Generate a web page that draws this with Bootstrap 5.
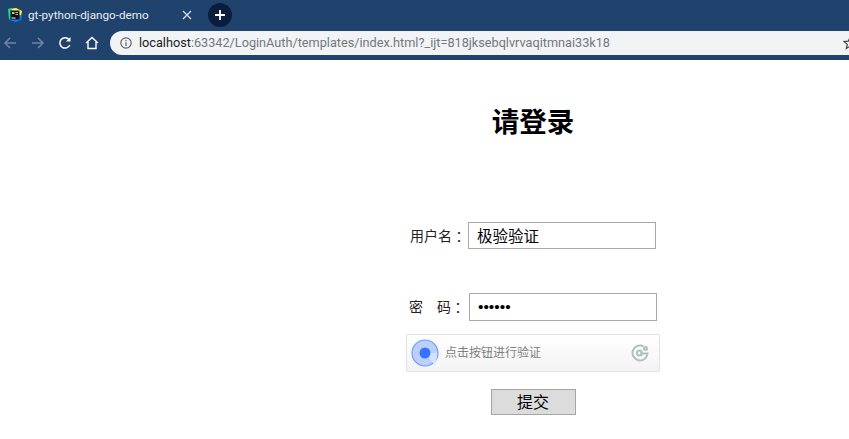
<!DOCTYPE html>
<html lang="zh">
<head>
    <meta charset="UTF-8">
    <meta name="viewport" content="width=device-width, initial-scale=1.0">
    <title>gt-python-django-demo</title>
    <link href="https://cdn.jsdelivr.net/npm/bootstrap@5.3.0/dist/css/bootstrap.min.css" rel="stylesheet">
    <style>
        html, body { height: 100%; overflow: hidden; background: #fff; }
        body { font-family: "Liberation Sans", "Noto Sans CJK SC", sans-serif; color: #000; }

        .chrome-bar { background: #20436d; height: 60px; }
        .tab-strip { height: 29px; padding-left: 8px; }
        .tab-title { font: 11.7px Roboto, "Liberation Sans", sans-serif; color: #e6ebf1; width: 153px; margin-left: 6px; white-space: nowrap; }
        .tab-close { color: #d5dce5; width: 12px; height: 12px; margin-right: 15px; }
        .new-tab { width: 24px; height: 24px; border-radius: 50%; background: #0b1c3d; }
        .tool-strip { height: 27px; padding-left: 3px; }
        .tool-btn { width: 27px; }
        .tool-first { width: 14px; margin-right: 7px; }
        .url-box { height: 24px; flex: 1 1 auto; margin-left: 5px; background: #f1f3f4; border-radius: 12px 0 0 12px; padding-left: 10px; font: 12.7px Roboto, "Liberation Sans", sans-serif; color: #71787f; white-space: nowrap; overflow: hidden; }
        .url-host { color: #202124; }
        .url-info { margin-right: 7px; }
        .url-star { margin-left: auto; margin-right: -8px; }

        .login-wrap { padding-left: 406px; width: 660px; }
        .login-title { font-size: 27.5px; font-weight: 700; line-height: 32px; margin: 47px 0 0; text-align: center; width: 254px; }
        .field-row { font-size: 14px; height: 28px; color: #222; }
        .row-user { margin-top: 82px; margin-left: 4px; }
        .row-pass { margin-top: 44px; margin-left: 3px; }
        .field-label { white-space: nowrap; }
        .row-user .field-label { margin-right: 2px; padding-top: 2px; }
        .row-pass .field-label { margin-right: 4px; }
        .label-colon { font-family: "Noto Sans CJK TC", sans-serif; line-height: 1; vertical-align: -1px; }
        .text-field { width: 188px; height: 27px; border: 1px solid #a9a9a9; border-radius: 0; padding: 0 8px; font-size: 15.5px; outline: 0; color: #000; background: #fff; }
        .row-pass .text-field { height: 28px; }
        .captcha-box { width: 254px; height: 38px; margin-top: 13px; border: 1px solid #e2e2e2; border-radius: 2px; background: linear-gradient(#fff, #f3f3f3); padding: 0 10px 0 4px; font-size: 12px; color: #808080; }
        .captcha-text { margin-left: 6px; }
        .submit-line { width: 254px; margin-top: 17px; }
        .submit-btn { width: 85px; height: 26px; background: #dcdcdc; border: 1px solid #a5a5a5; font-size: 16px; line-height: 22px; padding: 1px 0 0; color: #000; }
    </style>
</head>
<body>
    <div class="chrome-bar">
        <div class="tab-strip d-flex align-items-center">
            <svg width="14" height="14" viewBox="0 0 14 14">
                <path d="M1 1 8 0 14 3 13 8 7 5Z" fill="#fcf84a"/>
                <path d="M0 1 4 0 4 9 1 12Z" fill="#21d789"/>
                <path d="M1 12 7 5 14 8 13 12 8 14Z" fill="#087cfa"/>
                <rect x="2.500" y="2.500" width="9" height="9" fill="#111"/>
                <rect x="3.500" y="9.500" width="4" height="1" fill="#fff"/>
                <path d="M4 4H6.500V6H4ZM7.500 4H10V5H7.500ZM7.500 6H10V7H7.500Z" fill="#bbb"/>
            </svg>
            <span class="tab-title">gt-python-django-demo</span>
            <svg class="tab-close" viewBox="0 0 12 12"><path d="M2 2 10 10M10 2 2 10" stroke="currentColor" stroke-width="1.300"/></svg>
            <span class="new-tab d-flex align-items-center justify-content-center">
                <svg width="12" height="12" viewBox="0 0 12 12"><path d="M6 1V11M1 6H11" stroke="#fff" stroke-width="1.800"/></svg>
            </span>
        </div>
        <div class="tool-strip d-flex align-items-center">
            <span class="tool-first d-flex justify-content-center">
                <svg width="14" height="14" viewBox="0 0 14 14" fill="none" stroke="#71859e" stroke-width="1.500"><path d="M13 7H2M7 2 2 7 7 12"/></svg>
            </span>
            <span class="tool-btn d-flex justify-content-center">
                <svg width="14" height="14" viewBox="0 0 14 14" fill="none" stroke="#71859e" stroke-width="1.500"><path d="M1 7H12M7 2 12 7 7 12"/></svg>
            </span>
            <span class="tool-btn d-flex justify-content-center">
                <svg width="14" height="14" viewBox="0 0 14 14" fill="none" stroke="#fff" stroke-width="1.500"><path d="M11.800 9A5.200 5.200 0 1 1 11 3.500"/><path d="M12.500 1V5.500H8Z" fill="#fff" stroke="none"/></svg>
            </span>
            <span class="tool-btn d-flex justify-content-center">
                <svg width="14" height="14" viewBox="0 0 14 14" fill="none" stroke="#fff" stroke-width="1.400"><path d="M1 7 7 1.500 13 7M3 6V12.500H11V6"/></svg>
            </span>
            <div class="url-box d-flex align-items-center">
                <svg class="url-info flex-shrink-0" width="12" height="12" viewBox="0 0 12 12" fill="none" stroke="#5f6368" stroke-width="1.200"><circle cx="6" cy="6" r="5.200"/><path d="M6 5.200V9M6 3V4.200"/></svg>
                <span><span class="url-host">localhost</span>:63342/LoginAuth/templates/index.html?_ijt=818jksebqlvrvaqitmnai33k18</span>
                <svg class="url-star flex-shrink-0" width="14" height="14" viewBox="0 0 14 14" fill="none" stroke="#444" stroke-width="1.200"><path d="M7 1.300 8.700 5.200 12.900 5.600 9.700 8.400 10.700 12.500 7 10.300 3.300 12.500 4.300 8.400 1.100 5.600 5.300 5.200Z"/></svg>
            </div>
        </div>
    </div>

    <form class="login-wrap" onsubmit="return false">
        <h1 class="login-title">请登录</h1>
        <div class="field-row row-user d-flex align-items-center">
            <label class="field-label">用户名<span class="label-colon" lang="zh-TW">：</span></label>
            <input type="text" class="text-field" value="极验验证">
        </div>
        <div class="field-row row-pass d-flex align-items-center">
            <label class="field-label">密&emsp;码<span class="label-colon" lang="zh-TW">：</span></label>
            <input type="password" class="text-field" value="123456">
        </div>
        <div class="captcha-box d-flex align-items-center">
            <svg width="28" height="28" viewBox="0 0 28 28">
                <circle cx="14" cy="14" r="13" fill="#bcd0ff" stroke="#6d9bff" stroke-width="1.200"/>
                <path d="M14 14 24 26.500 25.500 20 26.400 14Z" fill="#d6e2ff"/>
                <circle cx="14" cy="14" r="5.500" fill="#3873ff"/>
            </svg>
            <span class="captcha-text flex-grow-1">点击按钮进行验证</span>
            <svg width="18" height="18" viewBox="0 0 18 18" fill="none" stroke="#b4bfc0" stroke-width="2"><path d="M12.500 2.300A7.500 7.500 0 1 0 16.500 9.500H9"/><circle cx="8.500" cy="9" r="2.500"/><circle cx="14.500" cy="4.500" r="1.500"/></svg>
        </div>
        <div class="submit-line d-flex justify-content-center">
            <button type="submit" class="submit-btn">提交</button>
        </div>
    </form>
    <script src="https://cdn.jsdelivr.net/npm/bootstrap@5.3.0/dist/js/bootstrap.bundle.min.js"></script>
</body>
</html>
